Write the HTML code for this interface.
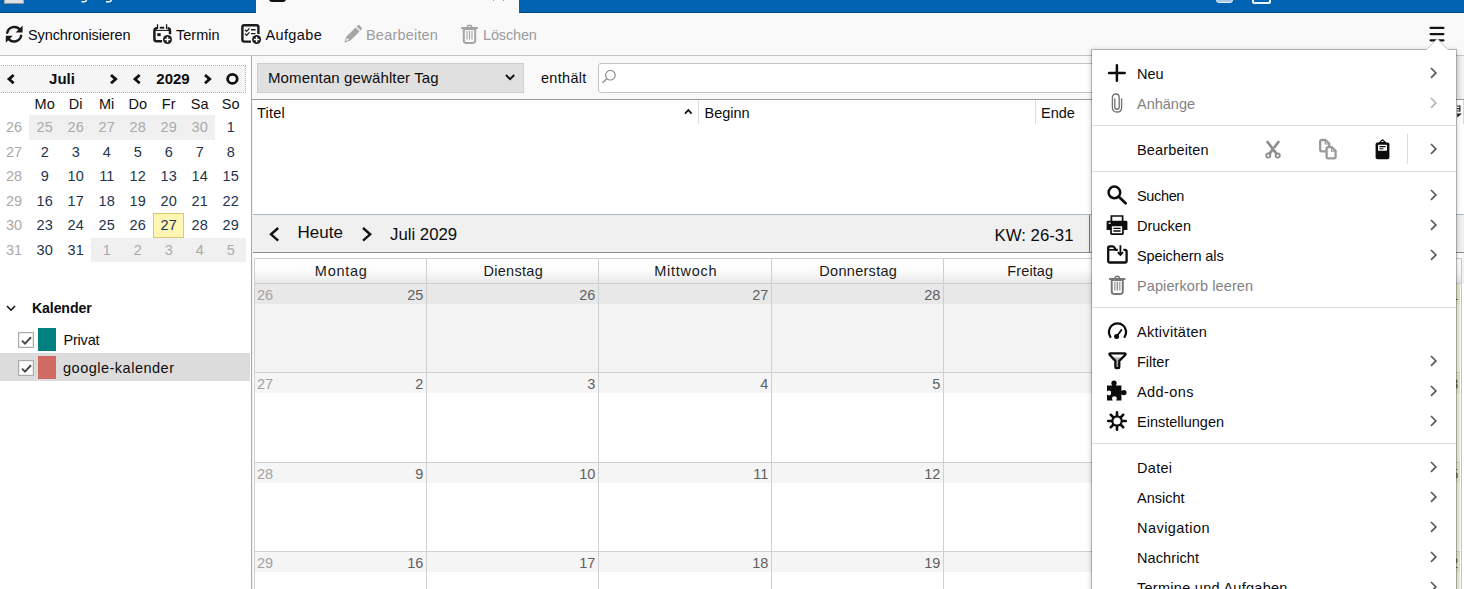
<!DOCTYPE html>
<html lang="de">
<head>
<meta charset="utf-8">
<title>Kalender</title>
<style>
*{box-sizing:border-box;margin:0;padding:0}
html,body{width:1464px;height:589px;overflow:hidden;background:#fff}
body{font-family:"Liberation Sans",sans-serif;font-size:14.5px;color:#0c0c0d;position:relative}
.abs{position:absolute}
.t{position:absolute;white-space:nowrap;line-height:18px}
svg{position:absolute;overflow:visible}
#tabbar{left:0;top:0;width:1464px;height:13px;background:#0063b1;border-bottom:1px solid #00498a}
#activetab{left:256px;top:0;width:263px;height:13px;background:#f9f9fa}
#toolbar{left:0;top:13px;width:1464px;height:43px;background:#f9f9fa;border-bottom:1px solid #c2c2c2}
.dis{color:#9c9c9c}
#left{left:0;top:56px;width:251px;height:533px;background:#fff}
#split{left:251px;top:56px;width:2px;height:533px;background:#eef0f4;border-left:1px solid #9fabc0}
#mmhead{left:-1px;top:65px;width:247px;height:28px;background:#f5f5f5;border:1px dotted #b4b4b4}
.b{font-weight:bold}
.mm{position:absolute;width:31px;text-align:center;line-height:18px;color:#24344f}
.mm.o{color:#aaa}
.mm.h{color:#111}
.wk{position:absolute;left:0;width:28px;text-align:center;line-height:18px;color:#aaa}
.mmbg{position:absolute;background:#f0f0f0}
#today{left:153px;top:213px;width:31px;height:25px;background:#fff6b3;border:1px solid #dcc872}
#calsel{left:0;top:353px;width:250px;height:28px;background:#dcdcdc}
.cb{position:absolute;width:16px;height:16px;background:#fff;border:1px solid #ababab;box-shadow:inset 0 0 0 1px #ececec}
#filterbar{left:252px;top:56px;width:1212px;height:44px;background:#f9f9fa;border-bottom:1px solid #9a9a9a}
#sel{left:257px;top:63px;width:267px;height:30px;background:#e0e0e0;border:1px solid #cecece}
#search{left:598px;top:63px;width:856px;height:30px;background:#fff;border:1px solid #c4c4c4;border-radius:3px}
#tree{left:253px;top:100px;width:1211px;height:114px;background:#fff}
.csep{position:absolute;top:100px;width:1px;height:24px;background:#dcdcdc}
#navbar{left:253px;top:214px;width:1211px;height:39px;background:#f0f0f0;border-top:1px solid #a9b8cc;border-bottom:1px solid #8e8e8e}
#month{left:253px;top:253px;width:1211px;height:336px;background:#fff}
.dh{position:absolute;top:258px;height:26px;background:linear-gradient(#ffffff 0%,#fdfdfd 45%,#e9e9e9 100%);border-left:1px solid #cfcfcf;border-top:1px solid #cfcfcf;border-bottom:1px solid #d2d2d2;text-align:center;line-height:24px;color:#1a1a1a;padding-left:1.5px}
.cell{position:absolute;border-left:1px solid #cfcfcf;border-top:1px solid #cfcfcf;background:#fff;height:91px}
.cell .lb{position:absolute;left:0;top:0;right:0;height:20px;background:#f5f5f5}
.cell.o{background:#f3f3f3}
.cell.o .lb{background:#e8e8e8}
.cell .d{position:absolute;right:2.6px;top:2px;line-height:18px;color:#606060}
.cell .w{position:absolute;left:2px;top:2px;line-height:18px;color:#a2a2a2}
#menu{left:1091px;top:49px;width:366px;height:560px;background:#fff;background-clip:padding-box;border:1px solid rgba(0,0,0,.23);box-shadow:0 1px 5px rgba(0,0,0,.2)}
.mi{position:absolute;left:1137px;white-space:nowrap;line-height:18px;color:#0c0c0d}
.mi.dis{color:#828282}
.sep{position:absolute;left:1092px;width:364px;height:1px;background:#dcdcdc}
</style>
</head>
<body>
<!-- TAB BAR -->
<div class="abs" id="tabbar"></div>
<div class="abs" id="activetab"></div>
<div class="abs" style="left:4px;top:0;width:20px;height:4px;background:#dcdfe3;border-bottom:1px solid #8a8f96;border-left:1px solid #9aa;border-right:1px solid #9aa"></div>
<svg width="40" height="4" style="left:80px;top:0" viewBox="0 0 40 4"><path d="M1.5 1.7 H4.2 Q6.3 1.7 6.6 0 M26 1.7 H29 Q31 1.7 31.4 0" fill="none" stroke="#fff" stroke-width="1.4"/></svg>
<div class="abs" style="left:269px;top:-8px;width:17px;height:10px;border:2.5px solid #111;border-radius:3px;background:transparent"></div>
<div class="abs" style="left:493px;top:0;width:1px;height:1px;background:#999"></div><div class="abs" style="left:503px;top:0;width:1px;height:1px;background:#999"></div>
<div class="abs" style="left:1216px;top:-8px;width:17px;height:11px;border:1.5px solid #e6eef7;border-radius:3px;background:#a9c8e6"></div>
<div class="abs" style="left:1252px;top:-8px;width:19px;height:12px;border:2px solid #eef3f9;border-radius:2px;background:transparent"></div>
<!-- TOOLBAR -->
<div class="abs" id="toolbar"></div>
<svg width="18.4" height="18.4" style="left:4.8px;top:24.6px" viewBox="0 0 18 18"><g fill="none" stroke="#1a1a1a" stroke-width="2.4" stroke-linecap="round"><path d="M2.2 7.6 A7 7 0 0 1 14.6 4.6"/><path d="M15.8 10.4 A7 7 0 0 1 3.4 13.4"/></g><path d="M17.2 0.6 V7.4 H10.4 Z M0.8 17.4 V10.6 H7.6 Z" fill="#1a1a1a"/></svg>
<div class="t" style="left:28px;top:26px;letter-spacing:-.1px">Synchronisieren</div>
<svg width="20" height="20" style="left:153px;top:24px" viewBox="0 0 20 20"><g fill="none" stroke="#1a1a1a"><path d="M4 4.3 Q1.4 4.3 1.4 7 V15 Q1.4 17.3 3.8 17.3 H9.2" stroke-width="2.5"/><path d="M14.6 4.3 Q17 4.3 17 7 V10.2" stroke-width="2.5"/><path d="M2.4 6.4 H16" stroke-width="1.1"/><path d="M6.8 3.7 H11.2" stroke-width="1.9"/><path d="M4.5 0.2 V4.9 M13.6 0.2 V4.9" stroke-width="1.3"/></g><rect x="4.3" y="9.2" width="3.4" height="2.9" fill="#1a1a1a"/><circle cx="14.5" cy="15.5" r="5.4" fill="#f9f9fa"/><circle cx="14.5" cy="15.5" r="4.5" fill="#1a1a1a"/><path d="M14.5 12.7 V18.3 M11.7 15.5 H17.3" stroke="#fff" stroke-width="1.5"/></svg>
<div class="t" style="left:176px;top:26px">Termin</div>
<svg width="21" height="20" style="left:241px;top:24px" viewBox="0 0 21 20"><path d="M10 17.6 H3.2 Q1.4 17.6 1.4 15.8 V3 Q1.4 1.2 3.2 1.2 H15.6 Q17.4 1.2 17.4 3 V10" fill="none" stroke="#1a1a1a" stroke-width="2.4"/><path d="M4 5.8 L5.6 7.4 L8.4 4.4 M4 9.8 L5.6 11.4 L8.4 8.4" fill="none" stroke="#1a1a1a" stroke-width="1.3"/><path d="M10 5.8 H14.6 M10 9.6 H14.6" stroke="#1a1a1a" stroke-width="1.4"/><circle cx="15.6" cy="15.5" r="5.4" fill="#f9f9fa"/><circle cx="15.6" cy="15.5" r="4.5" fill="#1a1a1a"/><path d="M15.6 12.7 V18.3 M12.8 15.5 H18.4" stroke="#fff" stroke-width="1.5"/></svg>
<div class="t" style="left:265.4px;top:26px;letter-spacing:.4px">Aufgabe</div>
<svg width="19" height="18" style="left:344px;top:25px" viewBox="0 0 19 18"><path d="M0.4 17.6 L2.2 11.8 L11.6 2.4 L15.6 6.4 L6.2 15.8 Z M12.6 1.4 L13.6 0.5 Q14.6 -0.3 15.6 0.6 L17.5 2.5 Q18.4 3.5 17.5 4.5 L16.6 5.4 Z" fill="#a5a5a5"/><path d="M1.9 16.1 L3 12.9 L5.1 15 Z" fill="#f9f9fa"/></svg>
<div class="t dis" style="left:366px;top:26px;letter-spacing:.2px">Bearbeiten</div>
<svg width="17.0" height="20.0" preserveAspectRatio="none" style="left:461px;top:24px" viewBox="0 0 17 20"><path d="M2.8 5 H14.2 V16.6 Q14.2 18.9 12 18.9 H5 Q2.8 18.9 2.8 16.6 Z" fill="#f9f9fa" stroke="#a5a5a5" stroke-width="2.0"/><path d="M0.9 4.1 H16.1" stroke="#a5a5a5" stroke-width="2" stroke-linecap="round"/><path d="M6.2 3.4 Q6.2 1.2 8.5 1.2 Q10.8 1.2 10.8 3.4" fill="none" stroke="#a5a5a5" stroke-width="1.4"/><path d="M6 6.8 V15.6 M11 6.8 V15.6" stroke="#c4c4c4" stroke-width="1.7"/><path d="M8.5 6.8 V15.6" stroke="#a5a5a5" stroke-width="1.1"/></svg>
<div class="t dis" style="left:483px;top:26px;letter-spacing:-.15px">Löschen</div>
<svg width="16" height="16" style="left:1429px;top:26px" viewBox="0 0 16 16"><path d="M1.6 1.9 H14.4 M1.6 8.1 H14.4 M1.6 14.3 H14.4" stroke="#141414" stroke-width="2.3" stroke-linecap="round"/></svg>
<!-- LEFT PANE -->
<div class="abs" id="left"></div>
<div class="abs" id="split"></div>
<div class="abs" id="mmhead"></div>
<svg width="4.7" height="8.2" style="left:8.6px;top:74.5px" viewBox="0 0 4.7 8.2"><path d="M4.7 0 L0 4.1 L4.7 8.2" fill="none" stroke="#111" stroke-width="2.8"/></svg>
<div class="t b" style="left:31px;top:70px;width:62px;text-align:center;font-size:15px">Juli</div>
<svg width="4.7" height="8.2" style="left:110.7px;top:74.5px" viewBox="0 0 4.7 8.2"><path d="M0 0 L4.7 4.1 L0 8.2" fill="none" stroke="#111" stroke-width="2.8"/></svg>
<svg width="4.7" height="8.2" style="left:134.7px;top:74.5px" viewBox="0 0 4.7 8.2"><path d="M4.7 0 L0 4.1 L4.7 8.2" fill="none" stroke="#111" stroke-width="2.8"/></svg>
<div class="t b" style="left:142px;top:70px;width:62px;text-align:center;font-size:15px">2029</div>
<svg width="4.7" height="8.2" style="left:205.3px;top:74.5px" viewBox="0 0 4.7 8.2"><path d="M0 0 L4.7 4.1 L0 8.2" fill="none" stroke="#111" stroke-width="2.8"/></svg>
<svg width="13" height="12" style="left:226px;top:72.8px" viewBox="0 0 13 12"><ellipse cx="6.4" cy="5.9" rx="4.8" ry="4.5" fill="none" stroke="#111" stroke-width="2.8"/></svg>
<div class="mm h" style="left:29.2px;top:95px">Mo</div>
<div class="mm h" style="left:60.2px;top:95px">Di</div>
<div class="mm h" style="left:91.2px;top:95px">Mi</div>
<div class="mm h" style="left:122.2px;top:95px">Do</div>
<div class="mm h" style="left:153.2px;top:95px">Fr</div>
<div class="mm h" style="left:184.2px;top:95px">Sa</div>
<div class="mm h" style="left:215.2px;top:95px">So</div>
<div class="mmbg" style="left:29.2px;top:115px;width:186px;height:24.5px"></div>
<div class="mmbg" style="left:91.2px;top:237.5px;width:155px;height:24.5px"></div>
<div class="abs" id="today"></div>
<div class="wk" style="top:118px">26</div>
<div class="mm o" style="left:29.2px;top:118px">25</div>
<div class="mm o" style="left:60.2px;top:118px">26</div>
<div class="mm o" style="left:91.2px;top:118px">27</div>
<div class="mm o" style="left:122.2px;top:118px">28</div>
<div class="mm o" style="left:153.2px;top:118px">29</div>
<div class="mm o" style="left:184.2px;top:118px">30</div>
<div class="mm" style="left:215.2px;top:118px">1</div>
<div class="wk" style="top:143px">27</div>
<div class="mm" style="left:29.2px;top:143px">2</div>
<div class="mm" style="left:60.2px;top:143px">3</div>
<div class="mm" style="left:91.2px;top:143px">4</div>
<div class="mm" style="left:122.2px;top:143px">5</div>
<div class="mm" style="left:153.2px;top:143px">6</div>
<div class="mm" style="left:184.2px;top:143px">7</div>
<div class="mm" style="left:215.2px;top:143px">8</div>
<div class="wk" style="top:167px">28</div>
<div class="mm" style="left:29.2px;top:167px">9</div>
<div class="mm" style="left:60.2px;top:167px">10</div>
<div class="mm" style="left:91.2px;top:167px">11</div>
<div class="mm" style="left:122.2px;top:167px">12</div>
<div class="mm" style="left:153.2px;top:167px">13</div>
<div class="mm" style="left:184.2px;top:167px">14</div>
<div class="mm" style="left:215.2px;top:167px">15</div>
<div class="wk" style="top:192px">29</div>
<div class="mm" style="left:29.2px;top:192px">16</div>
<div class="mm" style="left:60.2px;top:192px">17</div>
<div class="mm" style="left:91.2px;top:192px">18</div>
<div class="mm" style="left:122.2px;top:192px">19</div>
<div class="mm" style="left:153.2px;top:192px">20</div>
<div class="mm" style="left:184.2px;top:192px">21</div>
<div class="mm" style="left:215.2px;top:192px">22</div>
<div class="wk" style="top:216px">30</div>
<div class="mm" style="left:29.2px;top:216px">23</div>
<div class="mm" style="left:60.2px;top:216px">24</div>
<div class="mm" style="left:91.2px;top:216px">25</div>
<div class="mm" style="left:122.2px;top:216px">26</div>
<div class="mm" style="left:153.2px;top:216px">27</div>
<div class="mm" style="left:184.2px;top:216px">28</div>
<div class="mm" style="left:215.2px;top:216px">29</div>
<div class="wk" style="top:241px">31</div>
<div class="mm" style="left:29.2px;top:241px">30</div>
<div class="mm" style="left:60.2px;top:241px">31</div>
<div class="mm o" style="left:91.2px;top:241px">1</div>
<div class="mm o" style="left:122.2px;top:241px">2</div>
<div class="mm o" style="left:153.2px;top:241px">3</div>
<div class="mm o" style="left:184.2px;top:241px">4</div>
<div class="mm o" style="left:215.2px;top:241px">5</div>
<svg width="8" height="4.2" style="left:7.3px;top:305.6px" viewBox="0 0 8 4.2"><path d="M0 0 L4.0 4.2 L8 0" fill="none" stroke="#111" stroke-width="1.6"/></svg>
<div class="t b" style="left:32px;top:298.7px;font-size:14.2px;letter-spacing:-.15px">Kalender</div>
<div class="abs" id="calsel"></div>
<div class="cb" style="left:18px;top:332px"><svg width="11" height="9" style="left:1.8px;top:2.6px" viewBox="0 0 11 9"><path d="M1 4.6 L4 7.6 L10 1.2" fill="none" stroke="#4a4a4a" stroke-width="2"/></svg></div>
<div class="abs" style="left:38px;top:328px;width:18px;height:23px;background:#008080"></div>
<div class="t" style="left:63.5px;top:331.3px;letter-spacing:-.2px">Privat</div>
<div class="cb" style="left:18px;top:360px"><svg width="11" height="9" style="left:1.8px;top:2.6px" viewBox="0 0 11 9"><path d="M1 4.6 L4 7.6 L10 1.2" fill="none" stroke="#4a4a4a" stroke-width="2"/></svg></div>
<div class="abs" style="left:38px;top:356px;width:18px;height:23px;background:#d06b64"></div>
<div class="t" style="left:63px;top:359px;letter-spacing:.5px">google-kalender</div>
<!-- FILTER / TREE / NAV -->
<div class="abs" id="filterbar"></div>
<div class="abs" id="sel"></div>
<div class="t" style="left:268px;top:68.6px;font-size:15px;letter-spacing:.12px">Momentan gewählter Tag</div>
<svg width="8.2" height="4.2" style="left:506.2px;top:74.6px" viewBox="0 0 8.2 4.2"><path d="M0 0 L4.1 4.2 L8.2 0" fill="none" stroke="#111" stroke-width="2"/></svg>
<div class="t" style="left:541px;top:68.8px;letter-spacing:.3px">enthält</div>
<div class="abs" id="search"></div>
<svg width="16" height="16" style="left:601px;top:69px" viewBox="0 0 16 16"><circle cx="9.4" cy="6.2" r="4.8" fill="none" stroke="#8c8c8c" stroke-width="1.2"/><path d="M6 9.8 L1.4 13.8" stroke="#8c8c8c" stroke-width="1.4"/></svg>
<div class="abs" id="tree"></div>
<div class="t" style="left:257px;top:104px;letter-spacing:.2px">Titel</div>
<svg width="6.6" height="3.6" style="left:685px;top:110.4px" viewBox="0 0 6.6 3.6"><path d="M0 3.6 L3.3 0 L6.6 3.6" fill="none" stroke="#111" stroke-width="1.8"/></svg>
<div class="csep" style="left:698px"></div>
<div class="t" style="left:704.5px;top:104px">Beginn</div>
<div class="csep" style="left:1035px"></div>
<div class="t" style="left:1041px;top:104px">Ende</div>
<div class="abs" id="navbar"></div>
<svg width="7.2" height="12.6" style="left:271.4px;top:228.2px" viewBox="0 0 7.2 12.6"><path d="M7.2 0 L0 6.3 L7.2 12.6" fill="none" stroke="#111" stroke-width="2.4"/></svg>
<div class="t" style="left:297.5px;top:222.5px;font-size:17px;line-height:20px">Heute</div>
<svg width="7.2" height="12.6" style="left:362.9px;top:227.8px" viewBox="0 0 7.2 12.6"><path d="M0 0 L7.2 6.3 L0 12.6" fill="none" stroke="#111" stroke-width="2.4"/></svg>
<div class="t" style="left:390px;top:225px;font-size:16.8px;line-height:20px">Juli 2029</div>
<div class="t" style="left:994.5px;top:225.6px;font-size:16.8px;line-height:20px">KW: 26-31</div>
<div class="abs" style="left:1089px;top:215px;width:1px;height:37px;background:#7a7a7a"></div>
<!-- MONTH VIEW -->
<div class="abs" id="month"></div>
<div class="dh" style="left:254px;width:172px;letter-spacing:0.75px">Montag</div>
<div class="dh" style="left:426px;width:172px;letter-spacing:0.3px">Dienstag</div>
<div class="dh" style="left:598px;width:173px;letter-spacing:0.7px">Mittwoch</div>
<div class="dh" style="left:771px;width:172px;letter-spacing:0.3px">Donnerstag</div>
<div class="dh" style="left:943px;width:172px;letter-spacing:0.12px">Freitag</div>
<div class="dh" style="left:1115px;width:173px;letter-spacing:0px">Samstag</div>
<div class="dh" style="left:1288px;width:173px;letter-spacing:0px">Sonntag</div>
<div class="cell o" style="left:254px;top:283px;width:172px"><div class="lb"></div><span class="w">26</span><span class="d">25</span></div>
<div class="cell o" style="left:426px;top:283px;width:172px"><div class="lb"></div><span class="d">26</span></div>
<div class="cell o" style="left:598px;top:283px;width:173px"><div class="lb"></div><span class="d">27</span></div>
<div class="cell o" style="left:771px;top:283px;width:172px"><div class="lb"></div><span class="d">28</span></div>
<div class="cell o" style="left:943px;top:283px;width:172px"><div class="lb"></div><span class="d">29</span></div>
<div class="cell o" style="left:1115px;top:283px;width:173px"><div class="lb"></div><span class="d">30</span></div>
<div class="cell" style="left:1288px;top:283px;width:173px;background:#ecf2da"><div class="lb" style="background:#e2ebc6"></div><span class="d">1</span></div>
<div class="cell" style="left:254px;top:372px;width:172px"><div class="lb"></div><span class="w">27</span><span class="d">2</span></div>
<div class="cell" style="left:426px;top:372px;width:172px"><div class="lb"></div><span class="d">3</span></div>
<div class="cell" style="left:598px;top:372px;width:173px"><div class="lb"></div><span class="d">4</span></div>
<div class="cell" style="left:771px;top:372px;width:172px"><div class="lb"></div><span class="d">5</span></div>
<div class="cell" style="left:943px;top:372px;width:172px"><div class="lb"></div><span class="d">6</span></div>
<div class="cell" style="left:1115px;top:372px;width:173px"><div class="lb"></div><span class="d">7</span></div>
<div class="cell" style="left:1288px;top:372px;width:173px;background:#ecf2da"><div class="lb" style="background:#e2ebc6"></div><span class="d">8</span></div>
<div class="cell" style="left:254px;top:462px;width:172px"><div class="lb"></div><span class="w">28</span><span class="d">9</span></div>
<div class="cell" style="left:426px;top:462px;width:172px"><div class="lb"></div><span class="d">10</span></div>
<div class="cell" style="left:598px;top:462px;width:173px"><div class="lb"></div><span class="d">11</span></div>
<div class="cell" style="left:771px;top:462px;width:172px"><div class="lb"></div><span class="d">12</span></div>
<div class="cell" style="left:943px;top:462px;width:172px"><div class="lb"></div><span class="d">13</span></div>
<div class="cell" style="left:1115px;top:462px;width:173px"><div class="lb"></div><span class="d">14</span></div>
<div class="cell" style="left:1288px;top:462px;width:173px;background:#ecf2da"><div class="lb" style="background:#e2ebc6"></div><span class="d">15</span></div>
<div class="cell" style="left:254px;top:551px;width:172px"><div class="lb"></div><span class="w">29</span><span class="d">16</span></div>
<div class="cell" style="left:426px;top:551px;width:172px"><div class="lb"></div><span class="d">17</span></div>
<div class="cell" style="left:598px;top:551px;width:173px"><div class="lb"></div><span class="d">18</span></div>
<div class="cell" style="left:771px;top:551px;width:172px"><div class="lb"></div><span class="d">19</span></div>
<div class="cell" style="left:943px;top:551px;width:172px"><div class="lb"></div><span class="d">20</span></div>
<div class="cell" style="left:1115px;top:551px;width:173px"><div class="lb"></div><span class="d">21</span></div>
<div class="cell" style="left:1288px;top:551px;width:173px;background:#ecf2da"><div class="lb" style="background:#e2ebc6"></div><span class="d">22</span></div>
<div class="abs" style="left:1460px;top:284px;width:4px;height:305px;background:#fff"></div>
<div class="abs" style="left:1462px;top:253px;width:2px;height:31px;background:#f2f2f2"></div>
<div class="abs" style="left:1461px;top:258px;width:1px;height:331px;background:#c8c8c8"></div>
<!-- MENU PANEL -->
<div class="abs" id="menu"></div>
<svg width="24" height="13" style="left:1425px;top:38px" viewBox="0 0 24 13"><path d="M1 12 L12.3 0.8 L23.5 12 Z" fill="#fff"/><path d="M1.5 11.5 L12.3 0.8 L23 11.5" fill="none" stroke="#c3c3c3" stroke-width="1"/></svg>
<div class="mi" style="top:64.5px;letter-spacing:0px">Neu</div>
<svg width="4.9" height="9.8" style="left:1431.4px;top:67.7px" viewBox="0 0 4.9 9.8"><path d="M0 0 L4.9 4.9 L0 9.8" fill="none" stroke="#5c5c5c" stroke-width="1.7"/></svg>
<div class="mi dis" style="top:94.5px;letter-spacing:0px">Anhänge</div>
<svg width="4.9" height="9.8" style="left:1431.4px;top:97.7px" viewBox="0 0 4.9 9.8"><path d="M0 0 L4.9 4.9 L0 9.8" fill="none" stroke="#b4b4b4" stroke-width="1.7"/></svg>
<div class="mi" style="top:140.5px;letter-spacing:0.15px">Bearbeiten</div>
<svg width="4.9" height="9.8" style="left:1431.4px;top:143.7px" viewBox="0 0 4.9 9.8"><path d="M0 0 L4.9 4.9 L0 9.8" fill="none" stroke="#5c5c5c" stroke-width="1.7"/></svg>
<div class="mi" style="top:186.5px;letter-spacing:-0.35px">Suchen</div>
<svg width="4.9" height="9.8" style="left:1431.4px;top:189.7px" viewBox="0 0 4.9 9.8"><path d="M0 0 L4.9 4.9 L0 9.8" fill="none" stroke="#5c5c5c" stroke-width="1.7"/></svg>
<div class="mi" style="top:216.5px;letter-spacing:0px">Drucken</div>
<svg width="4.9" height="9.8" style="left:1431.4px;top:219.7px" viewBox="0 0 4.9 9.8"><path d="M0 0 L4.9 4.9 L0 9.8" fill="none" stroke="#5c5c5c" stroke-width="1.7"/></svg>
<div class="mi" style="top:246.5px;letter-spacing:-0.1px">Speichern als</div>
<svg width="4.9" height="9.8" style="left:1431.4px;top:249.7px" viewBox="0 0 4.9 9.8"><path d="M0 0 L4.9 4.9 L0 9.8" fill="none" stroke="#5c5c5c" stroke-width="1.7"/></svg>
<div class="mi dis" style="top:276.5px;letter-spacing:0.1px">Papierkorb leeren</div>
<div class="mi" style="top:322.5px;letter-spacing:0.3px">Aktivitäten</div>
<div class="mi" style="top:352.5px;letter-spacing:0px">Filter</div>
<svg width="4.9" height="9.8" style="left:1431.4px;top:355.7px" viewBox="0 0 4.9 9.8"><path d="M0 0 L4.9 4.9 L0 9.8" fill="none" stroke="#5c5c5c" stroke-width="1.7"/></svg>
<div class="mi" style="top:382.5px;letter-spacing:0.4px">Add-ons</div>
<svg width="4.9" height="9.8" style="left:1431.4px;top:385.7px" viewBox="0 0 4.9 9.8"><path d="M0 0 L4.9 4.9 L0 9.8" fill="none" stroke="#5c5c5c" stroke-width="1.7"/></svg>
<div class="mi" style="top:412.5px;letter-spacing:0px">Einstellungen</div>
<svg width="4.9" height="9.8" style="left:1431.4px;top:415.7px" viewBox="0 0 4.9 9.8"><path d="M0 0 L4.9 4.9 L0 9.8" fill="none" stroke="#5c5c5c" stroke-width="1.7"/></svg>
<div class="mi" style="top:458.5px;letter-spacing:0.3px">Datei</div>
<svg width="4.9" height="9.8" style="left:1431.4px;top:461.7px" viewBox="0 0 4.9 9.8"><path d="M0 0 L4.9 4.9 L0 9.8" fill="none" stroke="#5c5c5c" stroke-width="1.7"/></svg>
<div class="mi" style="top:488.5px;letter-spacing:0px">Ansicht</div>
<svg width="4.9" height="9.8" style="left:1431.4px;top:491.7px" viewBox="0 0 4.9 9.8"><path d="M0 0 L4.9 4.9 L0 9.8" fill="none" stroke="#5c5c5c" stroke-width="1.7"/></svg>
<div class="mi" style="top:518.5px;letter-spacing:0.45px">Navigation</div>
<svg width="4.9" height="9.8" style="left:1431.4px;top:521.7px" viewBox="0 0 4.9 9.8"><path d="M0 0 L4.9 4.9 L0 9.8" fill="none" stroke="#5c5c5c" stroke-width="1.7"/></svg>
<div class="mi" style="top:548.5px;letter-spacing:0.1px">Nachricht</div>
<svg width="4.9" height="9.8" style="left:1431.4px;top:551.7px" viewBox="0 0 4.9 9.8"><path d="M0 0 L4.9 4.9 L0 9.8" fill="none" stroke="#5c5c5c" stroke-width="1.7"/></svg>
<div class="mi" style="top:578.5px;letter-spacing:0.28px">Termine und Aufgaben</div>
<svg width="4.9" height="9.8" style="left:1431.4px;top:581.7px" viewBox="0 0 4.9 9.8"><path d="M0 0 L4.9 4.9 L0 9.8" fill="none" stroke="#5c5c5c" stroke-width="1.7"/></svg>
<div class="sep" style="top:125px"></div>
<div class="sep" style="top:171px"></div>
<div class="sep" style="top:307px"></div>
<div class="sep" style="top:443px"></div>
<div class="abs" style="left:1407px;top:134px;width:1px;height:30px;background:#dcdcdc"></div>
<svg width="18" height="18" style="left:1108px;top:64px" viewBox="0 0 18 18"><path d="M8.9 1.2 V16.8 M1.1 9 H16.7" stroke="#0c0c0d" stroke-width="2.5" stroke-linecap="round"/></svg>
<svg width="12" height="20" style="left:1111px;top:93px" viewBox="0 0 12 20"><path d="M10.6 6 V14.4 Q10.6 19 6 19 Q1.4 19 1.4 14.4 V4.6 Q1.4 1 4.8 1 Q8.2 1 8.2 4.6 V14 Q8.2 16.2 6 16.2 Q3.8 16.2 3.8 14 V6" fill="none" stroke="#727272" stroke-width="1.35" stroke-linecap="round"/></svg>
<svg width="16" height="18" style="left:1265px;top:140.5px" viewBox="0 0 16 18"><g fill="none" stroke="#8e8e8e"><circle cx="3.3" cy="14.5" r="2.1" stroke-width="1.8"/><circle cx="12.7" cy="14.5" r="2.1" stroke-width="1.8"/><path d="M2.6 1 L11.4 12.6" stroke-width="2.7" stroke-linecap="round"/><path d="M13.4 1 L9.6 6 M7.6 8.6 L4.6 12.6" stroke-width="2.7" stroke-linecap="round"/></g></svg>
<svg width="18" height="21" style="left:1319px;top:139px" viewBox="0 0 18 21"><g fill="#fff" stroke="#9a9a9a" stroke-width="2.3" stroke-linejoin="round"><path d="M1.2 2.6 Q1.2 1 2.8 1 H6.6 L10.2 4.6 V10.8 Q10.2 12.4 8.6 12.4 H2.8 Q1.2 12.4 1.2 10.8 Z"/><path d="M7.6 9.8 Q7.6 8.2 9.2 8.2 H13 L16.6 11.8 V17.8 Q16.6 19.4 15 19.4 H9.2 Q7.6 19.4 7.6 17.8 Z"/></g><path d="M6.2 1.4 V5 H9.8 M12.6 8.6 V12.2 H16.2" fill="none" stroke="#9a9a9a" stroke-width="1.2"/></svg>
<svg width="15" height="21" style="left:1375px;top:138.5px" viewBox="0 0 15 21"><path d="M2.4 3.4 H12.6 Q14.4 3.4 14.4 5.2 V18.4 Q14.4 20.2 12.6 20.2 H2.4 Q0.6 20.2 0.6 18.4 V5.2 Q0.6 3.4 2.4 3.4 Z" fill="#0c0c0d"/><path d="M4.4 3.6 L7.5 0.8 L10.6 3.6 Z" fill="#fff" stroke="#0c0c0d" stroke-width="1.2" stroke-linejoin="round"/><rect x="3" y="5.8" width="9" height="6" rx="0.8" fill="#fff"/><path d="M4.4 7.6 H10.6 M4.4 9.8 H8.4" stroke="#0c0c0d" stroke-width="1.1"/></svg>
<svg width="21" height="20" style="left:1107px;top:184.6px" viewBox="0 0 21 20"><circle cx="7.4" cy="7.4" r="5.8" fill="none" stroke="#0c0c0d" stroke-width="2.5"/><path d="M11.8 11.8 L18.6 18.2" stroke="#0c0c0d" stroke-width="2.7" stroke-linecap="round"/></svg>
<svg width="22" height="20" style="left:1106px;top:215px" viewBox="0 0 22 20"><path d="M5.4 6 V1 H16.6 V6" fill="#fff" stroke="#0c0c0d" stroke-width="1.7"/><path d="M1.8 5.8 H20.2 Q21.4 5.8 21.4 7 V15 H0.6 V7 Q0.6 5.8 1.8 5.8 Z" fill="#0c0c0d"/><rect x="2.6" y="7.6" width="2" height="1.3" fill="#fff"/><rect x="5" y="10.4" width="12" height="8.7" rx="0.6" fill="#fff" stroke="#0c0c0d" stroke-width="1.7"/><path d="M7.4 13.4 H14.6 M7.4 16 H14.6" stroke="#0c0c0d" stroke-width="1.3"/></svg>
<svg width="21" height="19" style="left:1106.6px;top:245px" viewBox="0 0 21 19"><path d="M10.8 4.8 H8.6 L7.2 2.2 Q6.7 1.3 5.6 1.3 H2.8 Q1.2 1.3 1.2 2.9 V15.8 Q1.2 17.5 2.9 17.5 H17.9 Q19.6 17.5 19.6 15.8 V6.5 Q19.6 4.8 17.9 4.8 H16.4" fill="none" stroke="#0c0c0d" stroke-width="2.3" stroke-linejoin="round"/><path d="M1.2 4.8 H9" stroke="#0c0c0d" stroke-width="1.6"/><path d="M13.4 0.2 V9.6 M10.8 7.2 L13.4 10 L16 7.2" fill="none" stroke="#0c0c0d" stroke-width="1.8"/></svg>
<svg width="16.5" height="20.0" preserveAspectRatio="none" style="left:1109.4px;top:275px" viewBox="0 0 17 20"><path d="M2.8 5 H14.2 V16.6 Q14.2 18.9 12 18.9 H5 Q2.8 18.9 2.8 16.6 Z" fill="#fff" stroke="#767676" stroke-width="2.0"/><path d="M0.9 4.1 H16.1" stroke="#767676" stroke-width="2" stroke-linecap="round"/><path d="M6.2 3.4 Q6.2 1.2 8.5 1.2 Q10.8 1.2 10.8 3.4" fill="none" stroke="#767676" stroke-width="1.4"/><path d="M6 6.8 V15.6 M11 6.8 V15.6" stroke="#adadad" stroke-width="1.7"/><path d="M8.5 6.8 V15.6" stroke="#767676" stroke-width="1.1"/></svg>
<svg width="21" height="18" style="left:1107px;top:322px" viewBox="0 0 21 18"><path d="M3.4 14.8 A8.6 8.6 0 1 1 17.6 14.8" fill="none" stroke="#0c0c0d" stroke-width="2.3" stroke-linecap="round"/><circle cx="9.6" cy="14.4" r="2.5" fill="#0c0c0d"/><path d="M10 14 L14.4 8" stroke="#0c0c0d" stroke-width="1.8" stroke-linecap="round"/></svg>
<svg width="19" height="17.6" preserveAspectRatio="none" style="left:1107.8px;top:351.9px" viewBox="0 0 19 17"><defs><linearGradient id="fg" x1="0" y1="0" x2="0" y2="1"><stop offset="0" stop-color="#fff"/><stop offset="0.24" stop-color="#fff"/><stop offset="0.3" stop-color="#b8b8b8"/><stop offset="1" stop-color="#8c8c8c"/></linearGradient></defs><path d="M2.2 1.3 H16.8 Q18.2 1.5 17.3 2.8 L11.3 8.6 V14.4 Q11.3 15.5 10.2 15.5 H8.4 Q7.3 15.5 7.3 14.4 V8.6 L1.7 2.8 Q0.8 1.5 2.2 1.3 Z" fill="url(#fg)" stroke="#0c0c0d" stroke-width="2.2" stroke-linejoin="round"/></svg>
<svg width="21.6" height="21" preserveAspectRatio="none" style="left:1106px;top:379.9px" viewBox="0 0 21 21"><path d="M1 5.6 H6.2 Q5.2 4.4 5.2 3.2 Q5.2 0.6 7.8 0.6 Q10.4 0.6 10.4 3.2 Q10.4 4.4 9.4 5.6 H15 V11 Q16.2 10 17.4 10 Q20 10 20 12.6 Q20 15.2 17.4 15.2 Q16.2 15.2 15 14.2 V20.4 H9.8 Q10.6 19.2 10.6 18.2 Q10.6 16.2 8.2 16.2 Q5.8 16.2 5.8 18.2 Q5.8 19.2 6.6 20.4 H1 V14.6 Q2 15.4 3 15.4 Q5 15.4 5 13 Q5 10.6 3 10.6 Q2 10.6 1 11.4 Z" fill="#0c0c0d"/></svg>
<svg width="20" height="18" style="left:1107px;top:412px" viewBox="0 0 20 18"><path d="M15.20 9.00 L18.80 9.00 M13.68 12.68 L16.22 15.22 M10.00 14.20 L10.00 17.80 M6.32 12.68 L3.78 15.22 M4.80 9.00 L1.20 9.00 M6.32 5.32 L3.78 2.78 M10.00 3.80 L10.00 0.20 M13.68 5.32 L16.22 2.78" stroke="#0c0c0d" stroke-width="2.6" stroke-linecap="round"/><circle cx="10" cy="9" r="4.7" fill="#fff" stroke="#0c0c0d" stroke-width="2.2"/></svg>
<div class="abs" style="left:1457px;top:56px;width:7px;height:43px;background:linear-gradient(90deg,rgba(0,0,0,.07),rgba(0,0,0,.025))"></div>
<svg width="6" height="13" style="left:1456.5px;top:105px" viewBox="0 0 6 13"><path d="M0 1 H3.4 M0 3.6 H3.4 M0 6 H3.4" stroke="#333" stroke-width="1.2"/><path d="M2.8 0.4 V6.6" stroke="#333" stroke-width="1.2"/><path d="M0 8.6 H5 L0.4 12.6 Z" fill="#222"/></svg>
<div class="abs" style="left:1463px;top:100px;width:1px;height:24px;background:#d8d8d8"></div>
</body>
</html>
